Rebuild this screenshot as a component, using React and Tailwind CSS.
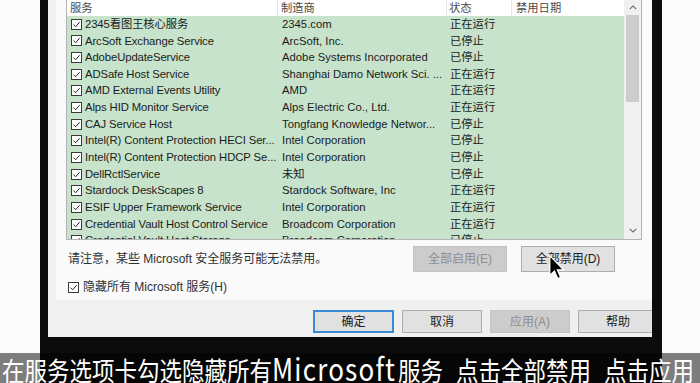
import React from "react";

const rows = [
  ["2345看图王核心服务", "2345.com", "正在运行"],
  ["ArcSoft Exchange Service", "ArcSoft, Inc.", "已停止"],
  ["AdobeUpdateService", "Adobe Systems Incorporated", "已停止"],
  ["ADSafe Host Service", "Shanghai Damo Network Sci. ...", "正在运行"],
  ["AMD External Events Utility", "AMD", "正在运行"],
  ["Alps HID Monitor Service", "Alps Electric Co., Ltd.", "正在运行"],
  ["CAJ Service Host", "Tongfang Knowledge Networ...", "已停止"],
  ["Intel(R) Content Protection HECI Ser...", "Intel Corporation", "已停止"],
  ["Intel(R) Content Protection HDCP Se...", "Intel Corporation", "已停止"],
  ["DellRctlService", "未知", "已停止"],
  ["Stardock DeskScapes 8", "Stardock Software, Inc", "正在运行"],
  ["ESIF Upper Framework Service", "Intel Corporation", "正在运行"],
  ["Credential Vault Host Control Service", "Broadcom Corporation", "正在运行"],
  ["Credential Vault Host Storage", "Broadcom Corporation", "已停止"],
];

const Check = () => (
  <span className="flex items-center justify-center w-[11px] h-[11px] border border-[#3a3a3a] bg-white shrink-0">
    <svg viewBox="0 0 10 10" className="w-[9px] h-[9px]">
      <path d="M1.6 5.1 L4 7.5 L8.5 2.5" fill="none" stroke="#1f1f1f" strokeWidth="1.1" />
    </svg>
  </span>
);

const Chevron = ({ up }) => (
  <svg viewBox="0 0 10 6" className="w-[8px] h-[5px]">
    <path d={up ? "M1 5 L5 1 L9 5" : "M1 1 L5 5 L9 1"} fill="none" stroke="#606060" strokeWidth="1.3" />
  </svg>
);

const Btn = ({ children, w = "w-[80px]", kind = "normal" }) => {
  const styles = {
    normal: "bg-[#e1e1e1] border border-[#adadad] text-[#1a1a1a]",
    focus: "bg-[#e1e1e1] border-2 border-[#3c8ad6] text-[#1a1a1a]",
    disabled: "bg-[#cccccc] border border-[#c4c4c4] text-[#8d8d8d]",
  };
  return (
    <div className={`${w} h-full shrink-0 flex items-center justify-center text-[12px] ${styles[kind]}`}>
      {children}
    </div>
  );
};

export default function App() {
  return (
    <div
      className="relative w-[700px] h-[383px] overflow-hidden bg-white"
      style={{ fontFamily: '"Liberation Sans", "Noto Sans CJK SC", sans-serif' }}
    >
      <div className="flex h-full">
        <div className="w-[40px] shrink-0 bg-[#fbfbfb]" />
        {/* screen bezel */}
        <div className="w-[622px] shrink-0 bg-[#0c0c0c] pl-[8px] pr-[10px]">
          {/* dialog */}
          <div className="h-[337px] bg-[#f0f0f0] overflow-hidden flex flex-col">
            {/* tab page */}
            <div className="ml-[8px] h-[300px] bg-[#fafafa] pl-[10px] flex flex-col">
              <div className="w-[576px] h-[241px] -mt-[1px] border border-[#b4b4b4] bg-white flex overflow-hidden text-[11.3px]">
                <div className="w-[557px] flex flex-col">
                  <div className="h-[16px] shrink-0 flex text-[#4a4a4a] bg-white">
                    <div className="w-[211px] pl-[3px] flex items-center border-r border-[#e5e5e5]">服务</div>
                    <div className="w-[169px] pl-[3px] flex items-center border-r border-[#e5e5e5]">制造商</div>
                    <div className="w-[65px] pl-[2px] flex items-center border-r border-[#e5e5e5]">状态</div>
                    <div className="flex-1 pl-[4px] flex items-center">禁用日期</div>
                  </div>
                  <div className="flex-1 bg-[#c7e3cb] text-[#1b1b1b]">
                    {rows.map(([name, maker, state]) => (
                      <div key={name} className="h-[16.67px] flex items-center whitespace-nowrap">
                        <div className="w-[211px] shrink-0 pl-[4px] flex items-center gap-[3px]">
                          <Check />
                          <span className="tracking-[-0.1px]">{name}</span>
                        </div>
                        <div className="w-[169px] shrink-0 pl-[4px]">{maker}</div>
                        <div className="w-[65px] shrink-0 pl-[3px]">{state}</div>
                        <div className="flex-1" />
                      </div>
                    ))}
                  </div>
                </div>
                {/* scrollbar */}
                <div className="w-[17px] bg-[#f0f0f0] flex flex-col items-center">
                  <div className="h-[15px] w-full flex items-center justify-center">
                    <Chevron up />
                  </div>
                  <div className="w-[13px] h-[87px] bg-[#cdcdcd]" />
                  <div className="flex-1" />
                  <div className="h-[17px] w-full flex items-center justify-center">
                    <Chevron />
                  </div>
                </div>
              </div>
              <div className="mt-[6px] h-[26px] flex pr-[37px]">
                <div className="flex-1 pl-[2px] pt-[4px] text-[12px] text-[#303030]">
                  请注意，某些 Microsoft 安全服务可能无法禁用。
                </div>
                <div className="flex gap-[14px] h-full">
                  <Btn w="w-[94px]" kind="disabled">全部启用(E)</Btn>
                  <Btn w="w-[94px]">全部禁用(D)</Btn>
                </div>
              </div>
              <div className="mt-[6px] pl-[2px] flex items-center gap-[4px] text-[12px] text-[#303030]">
                <Check />
                <span>隐藏所有 Microsoft 服务(H)</span>
              </div>
            </div>
            {/* bottom buttons */}
            <div className="mt-[10px] h-[23px] flex gap-[8px] pl-[265px]">
              <Btn w="w-[81px]" kind="focus">确定</Btn>
              <Btn>取消</Btn>
              <Btn kind="disabled">应用(A)</Btn>
              <Btn>帮助</Btn>
            </div>
          </div>
        </div>
        <div className="flex-1 bg-[#fbfbfb]" />
      </div>

      {/* mouse cursor */}
      <svg className="absolute left-[549px] top-[255px] w-[16px] h-[25px]" viewBox="0 0 12 19">
        <path d="M0.5 0.5 L0.5 15.5 L4 12.2 L6.6 18 L8.8 17 L6.3 11.3 L11 11.3 Z" fill="#000" stroke="#fff" strokeWidth="1" />
      </svg>

      {/* video caption */}
      <div
        className="absolute left-0 right-0 bottom-0 h-[30px] bg-[rgba(0,0,0,0.5)] flex items-center pl-[2px] text-white text-[22.5px] leading-none whitespace-nowrap"
        style={{ fontFamily: '"Noto Sans CJK SC", "Noto Sans", sans-serif' }}
      >
        <span className="inline-flex items-baseline scale-y-[1.18] origin-center">
          <span>在服务选项卡勾选隐藏所有</span>
          <span className="text-[26px] tracking-[1.2px] mr-[2px]">Microsoft</span>
          <span>服务</span>
          <span className="inline-block w-[13px]" />
          <span>点击全部禁用</span>
          <span className="inline-block w-[13px]" />
          <span>点击应用</span>
        </span>
      </div>
    </div>
  );
}
